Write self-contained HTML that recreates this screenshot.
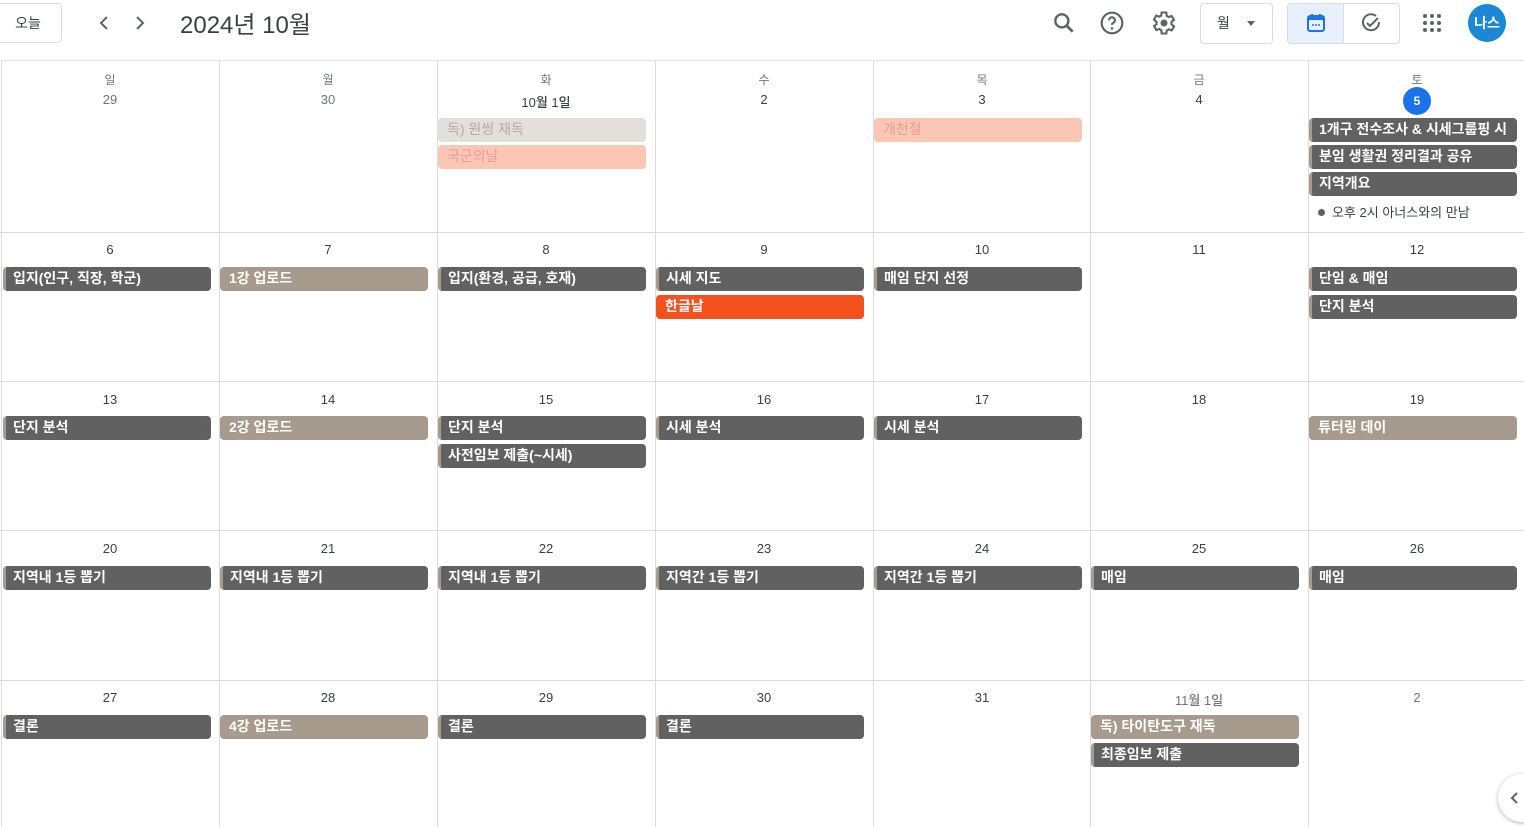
<!DOCTYPE html>
<html><head><meta charset="utf-8">
<style>
*{box-sizing:border-box;margin:0;padding:0}
body{width:1524px;height:827px;overflow:hidden;background:#fff;font-family:"Liberation Sans","Noto Sans CJK KR",sans-serif;color:#3c4043;position:relative}
.a{position:absolute}
.vl{position:absolute;top:60px;bottom:0;width:1px;background:#dadce0}
.hl{position:absolute;left:0;right:0;height:1px;background:#dadce0}
.wd{position:absolute;width:218px;text-align:center;font-size:12px;color:#70757a;top:71px}
.dt{position:absolute;width:218px;text-align:center;font-size:13px;font-weight:500;color:#3c4043}
.e{position:absolute;width:208px;height:24px;border-radius:4px;font-size:14px;font-weight:bold;color:#fff;line-height:23px;padding-left:9px;white-space:nowrap;overflow:hidden}
.d{background:#616161;border-left:3px solid #a79b8e;padding-left:7px}
.t{background:#a79b8e}
.g{background:#e3dfdb;color:#b3aca6;font-weight:normal}
.s{background:#fac6b6;color:#e8a08c;font-weight:normal}
.o{background:#f4511e}
</style></head><body>
<!-- header -->
<div class="a" style="left:-6px;top:3px;width:68px;height:40px;border:1px solid #dadce0;border-radius:4px;font-size:14px;line-height:38px;text-align:center;color:#3c4043">오늘</div>
<svg class="a" style="left:94px;top:13px" width="20" height="20" viewBox="0 0 20 20"><path d="M13 4 L7 10 L13 16" fill="none" stroke="#5f6368" stroke-width="2"/></svg>
<svg class="a" style="left:130px;top:13px" width="20" height="20" viewBox="0 0 20 20"><path d="M7 4 L13 10 L7 16" fill="none" stroke="#5f6368" stroke-width="2"/></svg>
<div class="a" style="left:180px;top:5px;font-size:24px;color:#3c4043">2024년 10월</div>
<svg class="a" style="left:1051px;top:10px" width="26" height="26" viewBox="0 0 24 24"><circle cx="10" cy="10" r="6" fill="none" stroke="#5f6368" stroke-width="2.2"/><path d="M14.5 14.5 L20 20" stroke="#5f6368" stroke-width="2.5"/></svg>
<svg class="a" style="left:1099px;top:10px" width="26" height="26" viewBox="0 0 24 24"><circle cx="12" cy="12" r="9.5" fill="none" stroke="#5f6368" stroke-width="2"/><path d="M9.3 9.5a2.7 2.7 0 1 1 3.8 2.4c-.8.4-1.1.9-1.1 1.8" fill="none" stroke="#5f6368" stroke-width="2"/><circle cx="12" cy="17" r="1.2" fill="#5f6368"/></svg>
<svg class="a" style="left:1150px;top:9px" width="28" height="28" viewBox="0 0 24 24"><path d="M19.4 13a7.5 7.5 0 0 0 0-2l2.1-1.6-2-3.5-2.5 1a7 7 0 0 0-1.7-1L15 3h-4l-.4 2.6a7 7 0 0 0-1.7 1l-2.5-1-2 3.5L6.6 11a7.5 7.5 0 0 0 0 2l-2.1 1.6 2 3.5 2.5-1a7 7 0 0 0 1.7 1L11 21h4l.4-2.6a7 7 0 0 0 1.7-1l2.5 1 2-3.5z" fill="none" stroke="#5f6368" stroke-width="1.8" transform="translate(-1 0)"/><circle cx="12" cy="12" r="3" fill="#5f6368"/></svg>
<div class="a" style="left:1200px;top:3px;width:73px;height:41px;border:1px solid #dadce0;border-radius:4px;font-size:14px;line-height:39px;padding-left:16px;color:#3c4043">월<span class="a" style="left:46px;top:17px;border:4px solid transparent;border-top:5px solid #5f6368"></span></div>
<div class="a" style="left:1287px;top:3px;width:113px;height:41px;border:1px solid #dadce0;border-radius:4px;overflow:hidden"><div class="a" style="left:0;top:0;width:56px;height:41px;background:#e8f0fe;border-right:1px solid #dadce0"></div></div>
<svg class="a" style="left:1305px;top:12px" width="22" height="22" viewBox="0 0 22 22"><rect x="3" y="4" width="16" height="15" rx="2" fill="none" stroke="#1a73e8" stroke-width="2"/><rect x="3" y="4" width="16" height="4" fill="#1a73e8"/><path d="M7 2v4M15 2v4" stroke="#1a73e8" stroke-width="2"/><circle cx="8" cy="13" r="1" fill="#1a73e8"/><circle cx="11" cy="13" r="1" fill="#1a73e8"/><circle cx="14" cy="13" r="1" fill="#1a73e8"/></svg>
<svg class="a" style="left:1360px;top:12px" width="22" height="22" viewBox="0 0 22 22"><path d="M19 10a8 8 0 1 1-3-6" fill="none" stroke="#5f6368" stroke-width="2"/><path d="M7 11l3 3 8-8" fill="none" stroke="#5f6368" stroke-width="2"/></svg>
<svg class="a" style="left:1421px;top:12px" width="22" height="22" viewBox="0 0 22 22" fill="#5f6368"><circle cx="4" cy="4" r="2"/><circle cx="11" cy="4" r="2"/><circle cx="18" cy="4" r="2"/><circle cx="4" cy="11" r="2"/><circle cx="11" cy="11" r="2"/><circle cx="18" cy="11" r="2"/><circle cx="4" cy="18" r="2"/><circle cx="11" cy="18" r="2"/><circle cx="18" cy="18" r="2"/></svg>
<div class="a" style="left:1468px;top:4px;width:38px;height:38px;border-radius:50%;background:#1a88d4;color:#fff;font-size:14px;font-weight:bold;text-align:center;line-height:38px">나스</div>
<div class="hl" style="top:60px;background:#dde0e4"></div>
<!-- grid lines -->
<div class="vl" style="left:1px"></div><div class="vl" style="left:219px"></div><div class="vl" style="left:437px"></div><div class="vl" style="left:655px"></div><div class="vl" style="left:873px"></div><div class="vl" style="left:1090px"></div><div class="vl" style="left:1308px"></div>
<div class="hl" style="top:232px"></div><div class="hl" style="top:381px"></div><div class="hl" style="top:530px"></div><div class="hl" style="top:680px"></div>
<!-- weekdays -->
<div class="wd" style="left:1px">일</div><div class="wd" style="left:219px">월</div><div class="wd" style="left:437px">화</div><div class="wd" style="left:655px">수</div><div class="wd" style="left:873px">목</div><div class="wd" style="left:1090px">금</div><div class="wd" style="left:1308px">토</div>
<!-- row 0 -->
<div class="dt" style="left:1px;top:92px;color:#70757a">29</div><div class="dt" style="left:219px;top:92px;color:#70757a">30</div><div class="dt" style="left:437px;top:92px">10월 1일</div><div class="dt" style="left:655px;top:92px">2</div><div class="dt" style="left:873px;top:92px">3</div><div class="dt" style="left:1090px;top:92px">4</div>
<div class="a" style="left:1403px;top:87px;width:28px;height:28px;border-radius:50%;background:#1a73e8;color:#fff;font-size:12px;font-weight:bold;text-align:center;line-height:28px">5</div>
<div class="e g" style="left:438px;top:118px">독) 원씽 재독</div>
<div class="e s" style="left:438px;top:145px">국군의날</div>
<div class="e s" style="left:874px;top:118px">개천절</div>
<div class="e d" style="left:1309px;top:118px">1개구 전수조사 &amp; 시세그룹핑 시</div>
<div class="e d" style="left:1309px;top:145px">분임 생활권 정리결과 공유</div>
<div class="e d" style="left:1309px;top:172px">지역개요</div>
<div class="a" style="left:1318px;top:202px;font-size:13px;color:#3c4043"><span style="display:inline-block;width:7px;height:7px;border-radius:50%;background:#616161;margin-right:7px;vertical-align:1px"></span>오후 2시 아너스와의 만남</div>
<!-- row 1 -->
<div class="dt" style="left:1px;top:242px">6</div><div class="dt" style="left:219px;top:242px">7</div><div class="dt" style="left:437px;top:242px">8</div><div class="dt" style="left:655px;top:242px">9</div><div class="dt" style="left:873px;top:242px">10</div><div class="dt" style="left:1090px;top:242px">11</div><div class="dt" style="left:1308px;top:242px">12</div>
<div class="e d" style="left:3px;top:267px">입지(인구, 직장, 학군)</div>
<div class="e t" style="left:220px;top:267px">1강 업로드</div>
<div class="e d" style="left:438px;top:267px">입지(환경, 공급, 호재)</div>
<div class="e d" style="left:656px;top:267px">시세 지도</div>
<div class="e o" style="left:656px;top:295px">한글날</div>
<div class="e d" style="left:874px;top:267px">매임 단지 선정</div>
<div class="e d" style="left:1309px;top:267px">단임 &amp; 매임</div>
<div class="e d" style="left:1309px;top:295px">단지 분석</div>
<!-- row 2 -->
<div class="dt" style="left:1px;top:392px">13</div><div class="dt" style="left:219px;top:392px">14</div><div class="dt" style="left:437px;top:392px">15</div><div class="dt" style="left:655px;top:392px">16</div><div class="dt" style="left:873px;top:392px">17</div><div class="dt" style="left:1090px;top:392px">18</div><div class="dt" style="left:1308px;top:392px">19</div>
<div class="e d" style="left:3px;top:416px">단지 분석</div>
<div class="e t" style="left:220px;top:416px">2강 업로드</div>
<div class="e d" style="left:438px;top:416px">단지 분석</div>
<div class="e d" style="left:438px;top:444px">사전임보 제출(~시세)</div>
<div class="e d" style="left:656px;top:416px">시세 분석</div>
<div class="e d" style="left:874px;top:416px">시세 분석</div>
<div class="e t" style="left:1309px;top:416px">튜터링 데이</div>
<!-- row 3 -->
<div class="dt" style="left:1px;top:541px">20</div><div class="dt" style="left:219px;top:541px">21</div><div class="dt" style="left:437px;top:541px">22</div><div class="dt" style="left:655px;top:541px">23</div><div class="dt" style="left:873px;top:541px">24</div><div class="dt" style="left:1090px;top:541px">25</div><div class="dt" style="left:1308px;top:541px">26</div>
<div class="e d" style="left:3px;top:566px">지역내 1등 뽑기</div>
<div class="e d" style="left:220px;top:566px">지역내 1등 뽑기</div>
<div class="e d" style="left:438px;top:566px">지역내 1등 뽑기</div>
<div class="e d" style="left:656px;top:566px">지역간 1등 뽑기</div>
<div class="e d" style="left:874px;top:566px">지역간 1등 뽑기</div>
<div class="e d" style="left:1091px;top:566px">매임</div>
<div class="e d" style="left:1309px;top:566px">매임</div>
<!-- row 4 -->
<div class="dt" style="left:1px;top:690px">27</div><div class="dt" style="left:219px;top:690px">28</div><div class="dt" style="left:437px;top:690px">29</div><div class="dt" style="left:655px;top:690px">30</div><div class="dt" style="left:873px;top:690px">31</div><div class="dt" style="left:1090px;top:690px;color:#70757a">11월 1일</div><div class="dt" style="left:1308px;top:690px;color:#70757a">2</div>
<div class="e d" style="left:3px;top:715px">결론</div>
<div class="e t" style="left:220px;top:715px">4강 업로드</div>
<div class="e d" style="left:438px;top:715px">결론</div>
<div class="e d" style="left:656px;top:715px">결론</div>
<div class="e t" style="left:1091px;top:715px">독) 타이탄도구 재독</div>
<div class="e d" style="left:1091px;top:743px">최종임보 제출</div>
<!-- side toggle -->
<div class="a" style="left:1498px;top:774px;width:48px;height:48px;border-radius:50%;background:#fff;box-shadow:0 1px 4px rgba(0,0,0,.3)"></div>
<svg class="a" style="left:1507px;top:790px" width="14" height="16" viewBox="0 0 14 16"><path d="M10 3 L5 8 L10 13" fill="none" stroke="#5f6368" stroke-width="2"/></svg>
</body></html>
